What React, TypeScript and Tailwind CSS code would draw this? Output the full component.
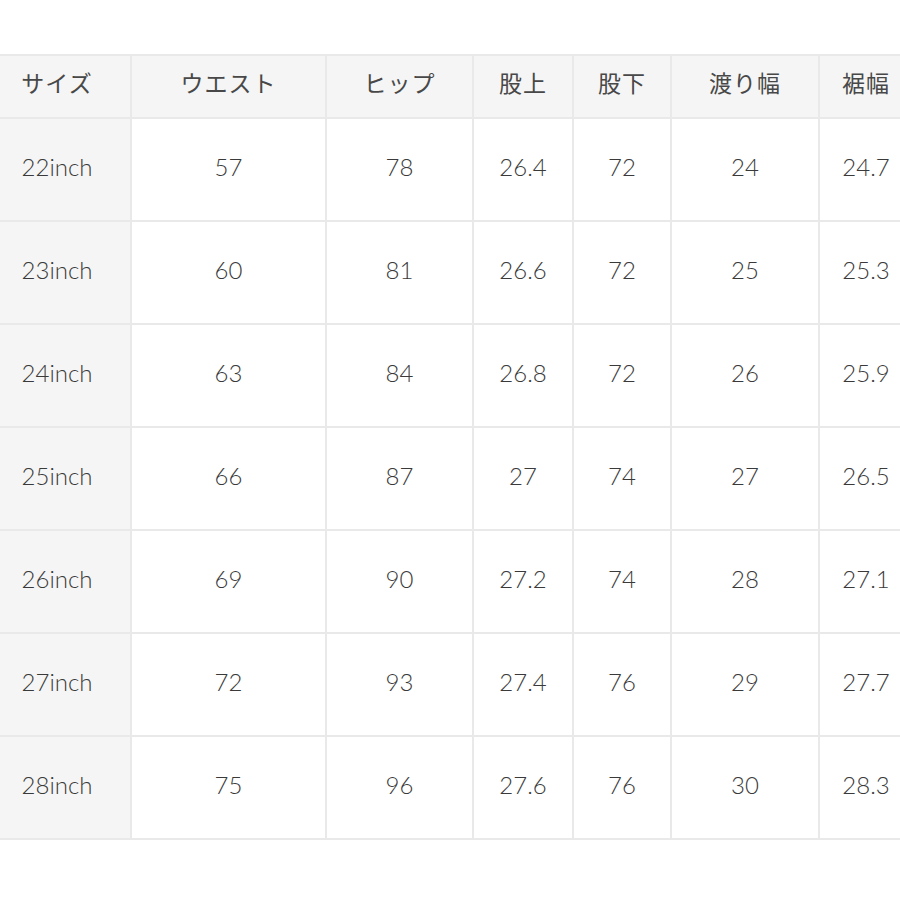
const HEADERS = ['サイズ', 'ウエスト', 'ヒップ', '股上', '股下', '渡り幅', '裾幅'];

const ROWS: string[][] = [
  ['22inch', '57', '78', '26.4', '72', '24', '24.7'],
  ['23inch', '60', '81', '26.6', '72', '25', '25.3'],
  ['24inch', '63', '84', '26.8', '72', '26', '25.9'],
  ['25inch', '66', '87', '27', '74', '27', '26.5'],
  ['26inch', '69', '90', '27.2', '74', '28', '27.1'],
  ['27inch', '72', '93', '27.4', '76', '29', '27.7'],
  ['28inch', '75', '96', '27.6', '76', '30', '28.3'],
];

// column widths, first col starts off-screen to the left
const COLS = [148, 195, 147, 100, 98, 148, 94];

export default function App() {
  return (
    <div className="w-[900px] h-[900px] bg-white overflow-hidden pt-[54px]">
      <table
        className="ml-[-18px] border-collapse table-fixed text-[#3a3a3a]"
        style={{ width: COLS.reduce((a, b) => a + b, 0) }}
      >
        <colgroup>
          {COLS.map((w, i) => (
            <col key={i} style={{ width: w }} />
          ))}
        </colgroup>
        <thead>
          <tr className="h-[63px] bg-[#f5f5f5]">
            {HEADERS.map((h) => (
              <th
                key={h}
                className="border-2 border-[#e9e9e9] text-center font-normal text-[23px] tracking-[1px] pb-[8px] text-[#484848] font-['Noto_Sans_CJK_JP','Noto_Sans',sans-serif]"
              >
                {h}
              </th>
            ))}
          </tr>
        </thead>
        <tbody>
          {ROWS.map((row) => (
            <tr key={row[0]} className="h-[103px]">
              {row.map((cell, i) => (
                <td
                  key={i}
                  className={
                    'border-2 border-[#e9e9e9] text-center text-[24px] font-light pb-[6px] font-["Lato","Noto_Sans",sans-serif] ' +
                    (i === 0 ? 'bg-[#f5f5f5]' : 'bg-white')
                  }
                >
                  {cell}
                </td>
              ))}
            </tr>
          ))}
        </tbody>
      </table>
    </div>
  );
}
